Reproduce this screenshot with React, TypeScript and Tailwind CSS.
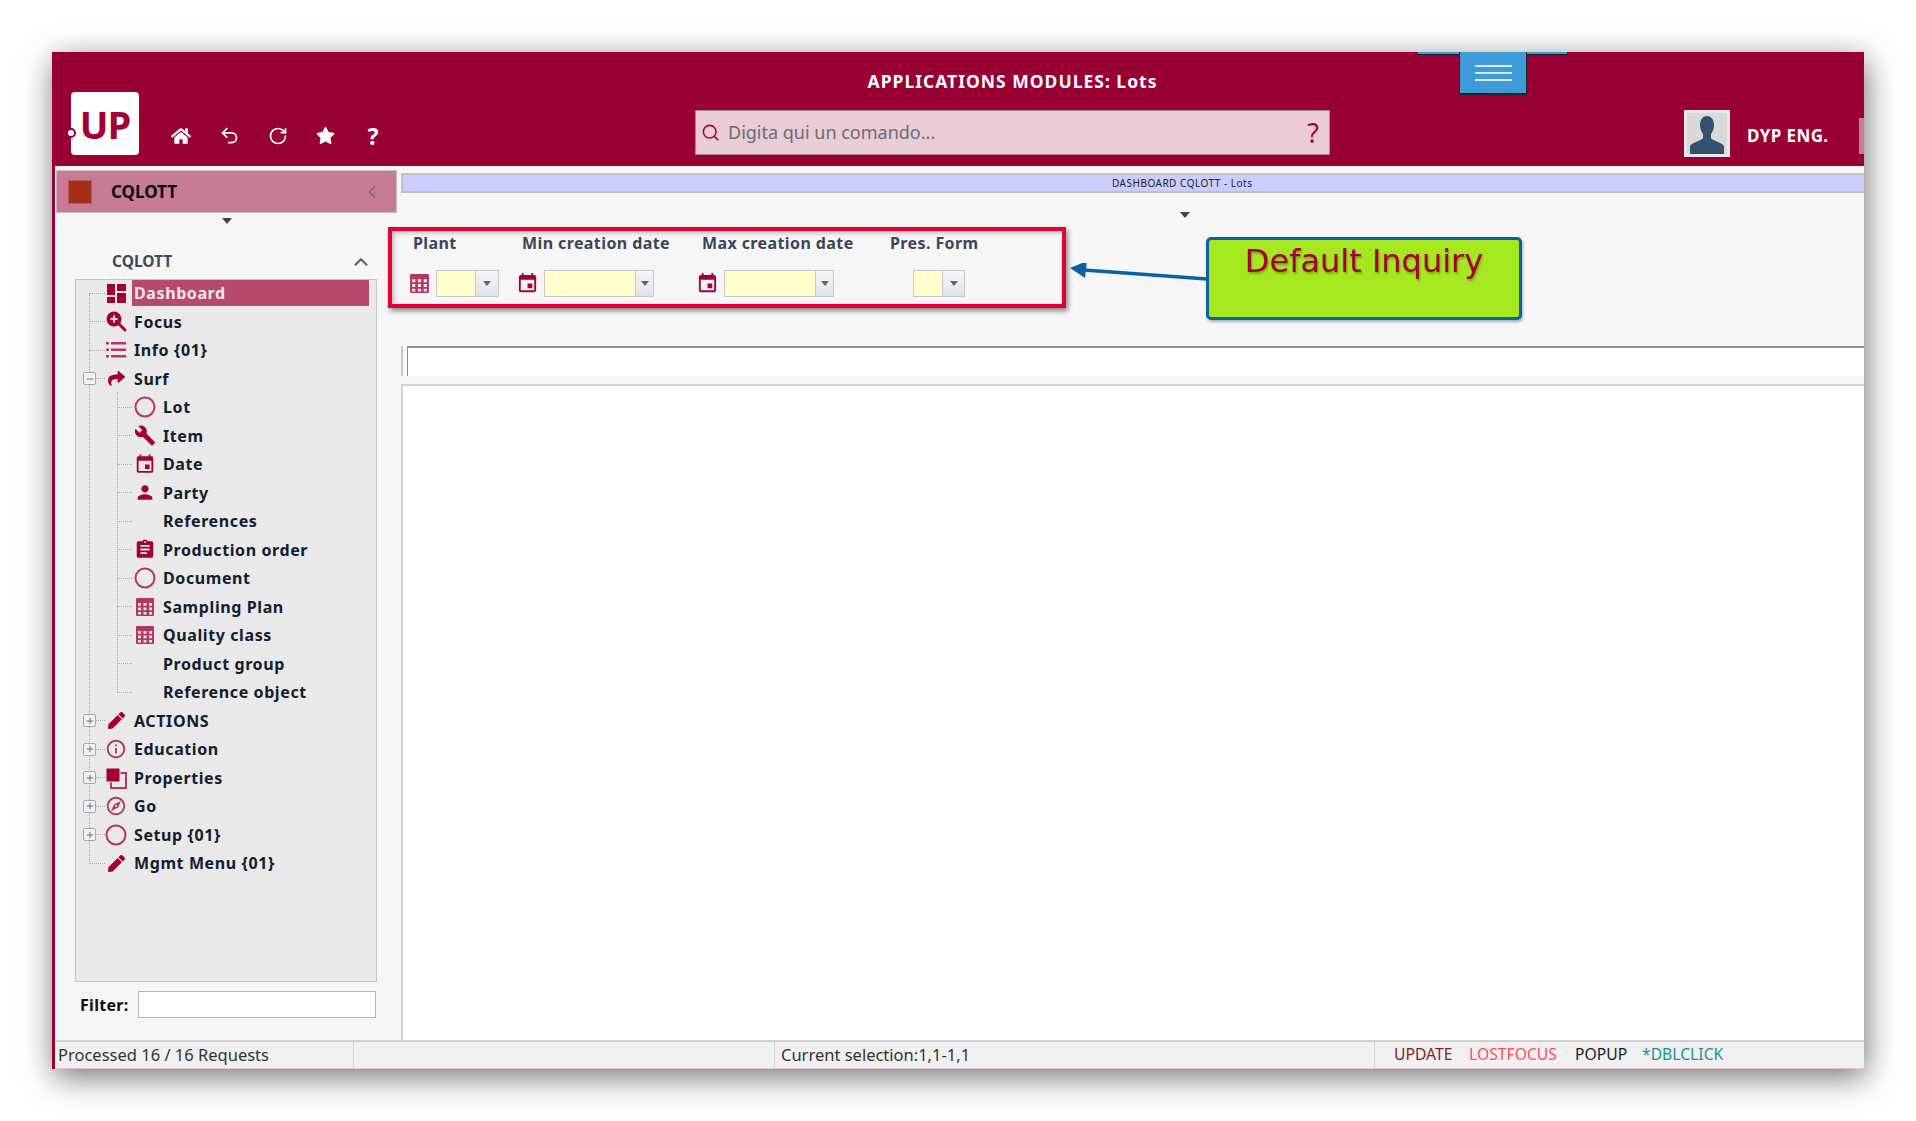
import type { ReactNode } from 'react'
import { Search, Undo2, RotateCw, ChevronLeft, ChevronUp, Plus, Minus } from 'lucide-react'
import { FaHome, FaStar, FaShare, FaPen } from 'react-icons/fa'
import { MdBuild, MdEvent, MdPerson, MdAssignment, MdInfoOutline, MdOutlineExplore } from 'react-icons/md'

const GridIcon = ({ size = 20 }: { size?: number }) => (
  <svg width={size} height={size} viewBox="0 0 20 20" fill="#b5365f">
    <path d="M2 1h16a1 1 0 0 1 1 1v16a1 1 0 0 1-1 1H2a1 1 0 0 1-1-1V2a1 1 0 0 1 1-1z" />
    <path
      fill="#efe6ea"
      d="M3 6h3v2.800H3zM8.500 6h3v2.800h-3zM14 6h3v2.800h-3zM3 10.500h3v2.800H3zM8.500 10.500h3v2.800h-3zM14 10.500h3v2.800h-3zM3 15h3v2.500H3zM8.500 15h3v2.500h-3zM14 15h3v2.500h-3z"
    />
  </svg>
)

const DashIcon = () => (
  <svg width={19} height={19} viewBox="0 0 19 19" fill="#a50034">
    <path d="M0 0h8v11H0zM10 0h9v7h-9zM0 13h8v6H0zM10 9h9v10h-9z" />
  </svg>
)

const RingIcon = () => (
  <svg width={22} height={22} viewBox="0 0 22 22" fill="none" stroke="#b5365f" strokeWidth="2">
    <circle cx="11" cy="11" r="9.500" />
  </svg>
)

const PropsIcon = () => (
  <svg width={22} height={22} viewBox="0 0 22 22">
    <path d="M6 6h15v15H6z" fill="none" stroke="#b5365f" strokeWidth="2" />
    <path d="M1 1h14v14H1z" fill="#a50034" stroke="#e9e9e9" strokeWidth="1" />
  </svg>
)

const FocusIcon = () => (
  <svg width={21} height={21} viewBox="0 0 21 21">
    <path d="M12 12l7 7" stroke="#a50034" strokeWidth="3" strokeLinecap="round" />
    <circle cx="8" cy="8" r="7.500" fill="#a50034" />
    <path d="M8 4.500v7M4.500 8h7" stroke="#f3e3e8" strokeWidth="2" />
  </svg>
)

const ListIcon = () => (
  <svg width={20} height={18} viewBox="0 0 20 18" fill="#b5365f">
    <path d="M0 1h3v2.500H0zM5 1h15v2.500H5zM0 7.500h3V10H0zM5 7.500h15V10H5zM0 14h3v2.500H0zM5 14h15v2.500H5z" />
  </svg>
)

const Avatar = () => (
  <svg width={40} height={41} viewBox="0 0 40 41">
    <rect width="40" height="41" fill="#d9d9d9" />
    <path
      d="M20 3c4.500 0 7 4 7 9 0 4-1.500 7-3 9v4c0 2 10 4 13 8v8H3v-8c3-4 13-6 13-8v-4c-1.500-2-3-5-3-9 0-5 2.500-9 7-9z"
      fill="#35506b"
    />
  </svg>
)

type Row = { label: string; icon?: ReactNode; level: 0 | 1; exp?: '+' | '-'; active?: boolean }

const c1 = 'text-[#a50034]'
const rows: Row[] = [
  { label: 'Dashboard', icon: <DashIcon />, level: 0, active: true },
  { label: 'Focus', icon: <FocusIcon />, level: 0 },
  { label: 'Info {01}', icon: <ListIcon />, level: 0 },
  { label: 'Surf', icon: <FaShare size={17} className={c1} />, level: 0, exp: '-' },
  { label: 'Lot', icon: <RingIcon />, level: 1 },
  { label: 'Item', icon: <MdBuild size={23} className={c1} />, level: 1 },
  { label: 'Date', icon: <MdEvent size={23} className={c1} />, level: 1 },
  { label: 'Party', icon: <MdPerson size={23} className={c1} />, level: 1 },
  { label: 'References', level: 1 },
  { label: 'Production order', icon: <MdAssignment size={23} className={c1} />, level: 1 },
  { label: 'Document', icon: <RingIcon />, level: 1 },
  { label: 'Sampling Plan', icon: <GridIcon />, level: 1 },
  { label: 'Quality class', icon: <GridIcon />, level: 1 },
  { label: 'Product group', level: 1 },
  { label: 'Reference object', level: 1 },
  { label: 'ACTIONS', icon: <FaPen size={17} className={c1} />, level: 0, exp: '+' },
  { label: 'Education', icon: <MdInfoOutline size={24} className="text-[#b5365f]" />, level: 0, exp: '+' },
  { label: 'Properties', icon: <PropsIcon />, level: 0, exp: '+' },
  { label: 'Go', icon: <MdOutlineExplore size={24} className="text-[#b5365f]" />, level: 0, exp: '+' },
  { label: 'Setup {01}', icon: <RingIcon />, level: 0, exp: '+' },
  { label: 'Mgmt Menu {01}', icon: <FaPen size={17} className={c1} />, level: 0 },
]

function TreeRow({ row }: { row: Row }) {
  if (row.level === 1) {
    return (
      <div className="flex h-[28.5px] items-center">
        <span className="ml-[41px] w-[15px] border-t border-dotted border-[#a8a8a8]" />
        <span className="ml-[2px] flex w-[22px] justify-center">{row.icon}</span>
        <span className="ml-[7px] text-[16px] font-bold tracking-[0.6px] text-[#10202f]">{row.label}</span>
      </div>
    )
  }
  return (
    <div className="flex h-[28.5px] items-center">
      <span className="ml-[7px] w-[13px]">
        {row.exp && (
          <span className="relative z-10 flex h-[13px] w-[13px] items-center justify-center rounded-[2px] border border-[#a8a8a8] bg-[#f2f2f2] text-[#3b53a0]">
            {row.exp === '+' ? <Plus size={10} strokeWidth={2} /> : <Minus size={10} strokeWidth={2} />}
          </span>
        )}
      </span>
      <span className={`w-[9px] border-t border-dotted border-[#a8a8a8] ${row.exp ? '' : '-ml-[7px] w-[16px]'}`} />
      <span className="flex w-[22px] justify-center">{row.icon}</span>
      {row.active ? (
        <span className="ml-[5px] mr-[7px] flex h-[26px] flex-1 items-center bg-[#b54a6d] pl-[2px] text-[16px] font-bold tracking-[0.6px] text-[#f6e6ec]">
          {row.label}
        </span>
      ) : (
        <span className="ml-[7px] text-[16px] font-bold tracking-[0.6px] text-[#10202f]">{row.label}</span>
      )}
    </div>
  )
}

function Combo({ width, arrow = 23 }: { width: number; arrow?: number }) {
  return (
    <div className="flex h-[27px] border border-[#c8c8c8]" style={{ width }}>
      <div className="flex-1 bg-[#ffffcc]" />
      <div
        className="flex items-center justify-center border-l border-[#c8c8c8] bg-gradient-to-b from-[#f4f6f8] to-[#dfe3e8]"
        style={{ width: arrow }}
      >
        <span className="h-0 w-0 border-x-[4.500px] border-t-[5px] border-x-transparent border-t-[#666]" />
      </div>
    </div>
  )
}

const Tri = () => <span className="h-0 w-0 border-x-[5px] border-t-[6px] border-x-transparent border-t-[#444]" />

const fieldLabel = 'h-[22px] text-[16px] leading-[22px] font-bold tracking-[0.4px] text-[#3a4658]'

function Inquiry() {
  return (
    <div className="flex pl-[7px] pt-[39px]">
      <div className="w-[109px]">
        <div className={`${fieldLabel} pl-[4px]`}>Plant</div>
        <div className="mt-[16px] flex items-center gap-[6px]">
          <GridIcon size={21} />
          <Combo width={63} />
        </div>
      </div>
      <div className="w-[180px]">
        <div className={`${fieldLabel} pl-[4px]`}>Min creation date</div>
        <div className="-ml-[2px] mt-[16px] flex items-center gap-[5px]">
          <MdEvent size={23} className={c1} />
          <Combo width={110} arrow={18} />
        </div>
      </div>
      <div className="w-[190px]">
        <div className={`${fieldLabel} pl-[4px]`}>Max creation date</div>
        <div className="-ml-[2px] mt-[16px] flex items-center gap-[5px]">
          <MdEvent size={23} className={c1} />
          <Combo width={110} arrow={18} />
        </div>
      </div>
      <div>
        <div className={`${fieldLabel} pl-[2px]`}>Pres. Form</div>
        <div className="ml-[25px] mt-[16px]">
          <Combo width={52} arrow={22} />
        </div>
      </div>
    </div>
  )
}

export default function App() {
  return (
    <div className="min-h-screen bg-white pl-[52px] pt-[52px] font-['Noto_Sans',sans-serif]">
      <div className="relative flex h-[1017px] w-[1812px] flex-col border-l-[3px] border-[#990033] bg-[#f6f6f6] shadow-[2px_8px_30px_rgba(0,0,0,0.55)]">
        {/* barra superiore */}
        <header className="relative flex h-[114px] shrink-0 items-end bg-[#990033] pb-[11px]">
          <div className="flex w-[640px] items-center pl-[16px]">
            <div className="relative flex h-[63px] w-[68px] items-center justify-center rounded-[4px] bg-white">
              <span className="absolute -left-[5px] top-[36px] h-[10px] w-[10px] rounded-full border-2 border-[#990033] bg-white" />
              <span className="text-[38px] leading-none font-bold tracking-[-1px] text-[#a50034] font-['Open_Sans',sans-serif]">
                UP
              </span>
            </div>
            <div className="mt-[24px] ml-[32px] flex items-center gap-[28px] text-white">
              <FaHome size={20} />
              <Undo2 size={21} />
              <RotateCw size={20} />
              <FaStar size={19} />
              <span className="w-[20px] text-center text-[23px] leading-[20px] font-bold">?</span>
            </div>
          </div>
          <div className="flex w-[635px] flex-col">
            <div className="mb-[19px] text-center text-[17.5px] leading-[20px] font-bold tracking-[1px] text-white">
              APPLICATIONS MODULES: Lots
            </div>
            <div className="flex h-[45px] items-center border border-[#a28a92] bg-[#e9ccd5] pl-[5px] pr-[10px]">
              <Search size={19} className="text-[#a50034]" />
              <span className="ml-[8px] flex-1 text-[18px] text-[#6b6b75]">Digita qui un comando...</span>
              <span className="text-[27px] leading-none text-[#a50034]">?</span>
            </div>
          </div>
          <div className="-mb-[2px] ml-[354px] flex items-center">
            <div className="border-[3px] border-[#e8e8e8]">
              <Avatar />
            </div>
            <span className="ml-[17px] mt-[4px] text-[17px] font-bold tracking-[0.4px] text-white">DYP ENG.</span>
          </div>
          <div className="absolute right-0 top-[66px] h-[36px] w-[5px] bg-[#c87b95]" />
          <div className="absolute left-[1363px] top-0 h-[3px] w-[149px] border-b border-[#222] bg-[#3f9bd8]" />
          <div className="absolute left-[1404px] top-0 flex h-[43px] w-[68px] flex-col items-center justify-center gap-[5px] border-x border-b-2 border-[#222] bg-[#3f9bd8]">
            <span className="h-[2px] w-[37px] bg-[#d8eaf6]" />
            <span className="h-[2px] w-[37px] bg-[#d8eaf6]" />
            <span className="h-[2px] w-[37px] bg-[#d8eaf6]" />
          </div>
        </header>

        <div className="flex min-h-0 flex-1">
          {/* menu laterale */}
          <aside className="flex w-[346px] shrink-0 flex-col">
            <div className="ml-[1px] mt-[4px] flex h-[43px] w-[341px] items-center border border-[#c9bcc1] bg-[#c87b95] pl-[11px] pr-[14px]">
              <span className="h-[24px] w-[24px] border border-[#b9604b] bg-[#a5301a]" />
              <span className="ml-[19px] flex-1 text-[17px] font-bold text-[#0a0a14]">CQLOTT</span>
              <ChevronLeft size={20} className="text-[#7a6570]" />
            </div>
            <div className="flex h-[32px] justify-center pr-[3px] pt-[5px]">
              <Tri />
            </div>
            <div className="flex h-[34px] items-center pl-[57px] pr-[29px]">
              <span className="flex-1 text-[15.5px] font-bold text-[#3a4b5c]">CQLOTT</span>
              <ChevronUp size={22} strokeWidth={2.500} className="text-[#666]" />
            </div>
            <div className="relative ml-[20px] h-[703px] w-[302px] border border-[#c4c4c4] bg-[#e9e9e9]">
              <span className="absolute left-[13px] top-[14px] h-[570px] border-l border-dotted border-[#a8a8a8]" />
              <span className="absolute left-[41px] top-[112px] h-[300px] border-l border-dotted border-[#a8a8a8]" />
              <div className="relative -mt-px">
                {rows.map(r => (
                  <TreeRow key={r.label} row={r} />
                ))}
              </div>
            </div>
            <div className="mt-[9px] flex h-[27px] items-center pl-[25px]">
              <span className="mt-[1px] w-[58px] text-[16px] font-bold tracking-[0.3px] text-[#111]">Filter:</span>
              <div className="h-[27px] w-[238px] border border-[#b4b4b4] bg-white" />
            </div>
          </aside>

          {/* area dashboard */}
          <main className="flex min-w-0 flex-1 flex-col">
            <div className="mt-[7px] flex h-[20px] shrink-0 items-center border-y-2 border-l-2 border-[#c2c2c2] bg-[#ccccff] pl-[709px] text-[10px] tracking-[0.5px] text-[#222]">
              DASHBOARD CQLOTT - Lots
            </div>
            <div className="relative h-[153px] shrink-0">
              <div className="absolute left-[779px] top-[19px] flex">
                <Tri />
              </div>
              <div className="pl-[1px]">
                <Inquiry />
              </div>
              <div className="absolute -left-[13px] top-[34px] h-[81px] w-[678px] border-4 border-[#e4002f] shadow-[2px_3px_5px_rgba(0,0,0,0.45),inset_2px_2px_4px_rgba(0,0,0,0.25)]" />
              <svg className="absolute left-[665px] top-[70px]" width={150} height={24} viewBox="0 0 150 24">
                <path d="M18 7 L141 16" stroke="#0a62a0" strokeWidth="3.500" fill="none" />
                <path d="M4 5 L21 -2 L19 15 Z" fill="#0a62a0" />
              </svg>
              <div className="absolute left-[805px] top-[44px] flex h-[83px] w-[316px] justify-center rounded-[5px] border-[3px] border-[#0a62a0] bg-[#a6e81f] shadow-[1px_2px_3px_rgba(0,0,0,0.3)]">
                <span className="mt-[1px] text-[32px] leading-[40px] text-[#a50034] [text-shadow:1px_2px_2px_rgba(0,0,0,0.25)] font-['DejaVu_Sans',sans-serif]">
                  Default Inquiry
                </span>
              </div>
            </div>
            <div className="h-[30px] shrink-0 border-l-2 border-[#c8c8c8] pl-[4px]">
              <div className="h-[30px] border-l border-t-2 border-[#8f8f8f] bg-white" />
            </div>
            <div className="mt-[8px] flex-1 border-l-2 border-t-2 border-[#d2d2d2] bg-white" />
          </main>
        </div>

        {/* barra di stato */}
        <footer className="flex h-[29px] shrink-0 items-center border-t-2 border-b border-t-[#d0d0d0] border-b-[#e3c3cd] bg-[#f0f0f0] text-[16.5px] text-[#333]">
          <div className="flex h-full w-[299px] items-center border-r border-[#d6d6d6] pl-[3px]">Processed 16 / 16 Requests</div>
          <div className="h-full w-[421px] border-r border-[#d6d6d6]" />
          <div className="flex h-full w-[600px] items-center border-r border-[#d6d6d6] pl-[6px]">Current selection:1,1-1,1</div>
          <div className="flex items-center pl-[19px] text-[15.7px]">
            <span className="w-[75px] text-[#8c1c24]">UPDATE</span>
            <span className="w-[106px] text-[#ff4d5e]">LOSTFOCUS</span>
            <span className="w-[67px] text-[#222]">POPUP</span>
            <span className="text-[#1a938f]">*DBLCLICK</span>
          </div>
        </footer>
      </div>
    </div>
  )
}
